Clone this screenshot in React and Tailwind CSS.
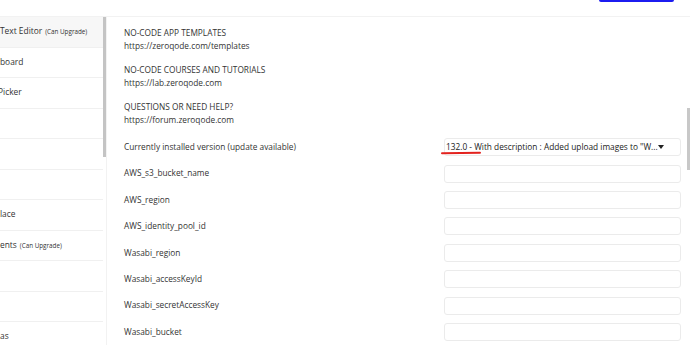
export default function App() {
  const sideRows = [
    { text: "Text Editor", note: "(Can Upgrade)", active: true },
    { text: "board" },
    { text: "Picker", shift: true },
    { text: "" },
    { text: "" },
    { text: "" },
    { text: "lace" },
    { text: "ents", note: "(Can Upgrade)" },
    { text: "" },
    { text: "" },
    { text: "as" },
  ];

  const links = [
    ["NO-CODE APP TEMPLATES", "https://zeroqode.com/templates"],
    ["NO-CODE COURSES AND TUTORIALS", "https://lab.zeroqode.com"],
    ["QUESTIONS OR NEED HELP?", "https://forum.zeroqode.com"],
  ];

  const fields = [
    "AWS_s3_bucket_name",
    "AWS_region",
    "AWS_identity_pool_id",
    "Wasabi_region",
    "Wasabi_accessKeyId",
    "Wasabi_secretAccessKey",
    "Wasabi_bucket",
  ];

  return (
    <div
      className="relative h-[345px] w-[690px] overflow-hidden bg-white text-[#333]"
      style={{ fontFamily: '"Open Sans", "Liberation Sans", sans-serif' }}
    >
      {/* header */}
      <div className="flex h-[17px] items-start justify-end border-b border-[#f2f2f2] pr-[16px]">
        <div className="h-[2px] w-[75px] rounded-b-[2px] bg-[#1c1cf0]" />
      </div>

      <div className="flex h-[328px]">
        {/* sidebar */}
        <div className="relative w-[107px] shrink-0 overflow-hidden border-r border-[#f2f2f2]">
          {sideRows.map((r, i) => (
            <div
              key={i}
              className={`flex h-[30.5px] w-[103px] items-center overflow-hidden whitespace-nowrap border-b border-[#f0f0f0] text-[8.4px] text-[#333] ${
                r.active ? "bg-[#f7f7f7]" : ""
              }`}
            >
              <span className={r.shift ? "-ml-[2px]" : ""}>{r.text}</span>
              {r.note && <span className="ml-[3px] text-[6.3px]">{r.note}</span>}
            </div>
          ))}
          <div className="absolute left-[103px] top-0 h-[140px] w-[3px] bg-[#c4c4c4]" />
        </div>

        {/* main */}
        <div className="relative flex-1 pl-[17px] pr-[12px] pt-[9px] text-[8.3px]">
          <div className="flex flex-col gap-[11px]">
            {links.map(([title, url]) => (
              <div key={title} className="leading-[13px]">
                <div>{title}</div>
                <div>{url}</div>
              </div>
            ))}
          </div>

          <div className="mt-[8px] grid grid-cols-[320px_1fr]">
            <div className="flex h-[26.4px] items-center">Currently installed version (update available)</div>
            <div className="flex h-[26.4px] items-center">
              <div className="relative flex h-[18px] w-full items-center justify-between rounded-[3px] border border-[#ebebeb] pl-[1px] pr-[16px] text-[#222]">
                <span className="whitespace-nowrap">132.0 - With description : Added upload images to "W...</span>
                <svg width="6" height="4" viewBox="0 0 6 4" className="shrink-0">
                  <path d="M0 0H6L3 4Z" fill="#222" />
                </svg>
                <div className="absolute -left-[4px] top-[13px] h-[2px] w-[40px] -rotate-[1deg] rounded-full bg-[#e3231f]" />
              </div>
            </div>
            {fields.map((f) => (
              <div key={f} className="contents">
                <div className="flex h-[26.4px] items-center">{f}</div>
                <div className="flex h-[26.4px] items-center">
                  <div className="h-[18px] w-full rounded-[3px] border border-[#ebebeb]" />
                </div>
              </div>
            ))}
          </div>

          <div className="absolute right-[3px] top-[91px] h-[62px] w-[3px] bg-[#c8c8c8]" />
        </div>
      </div>
    </div>
  );
}
